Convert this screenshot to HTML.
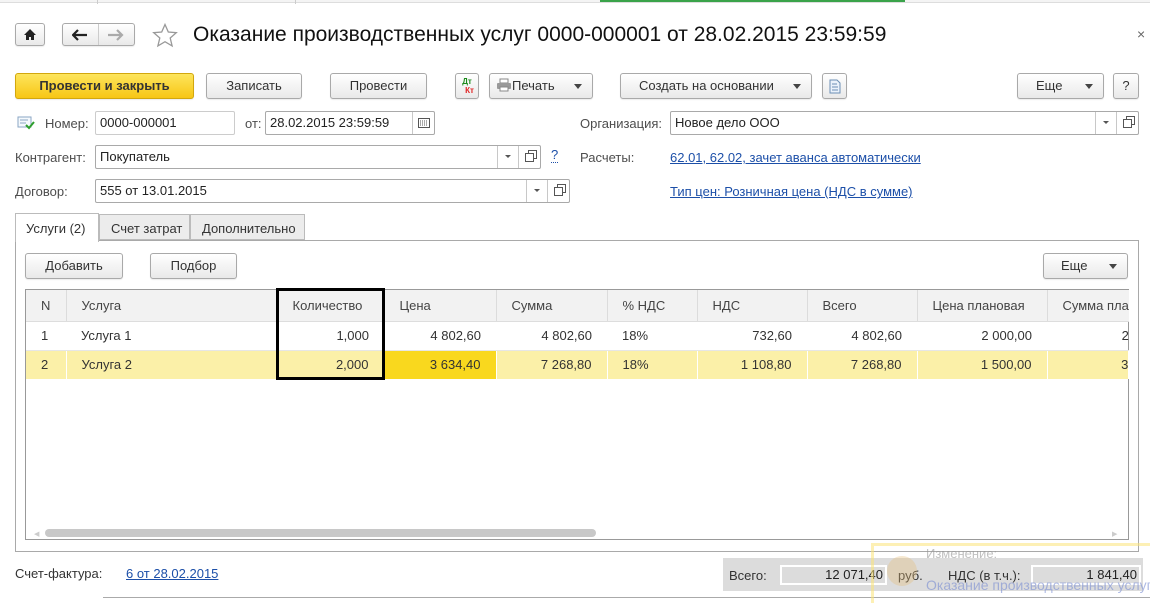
<!DOCTYPE html>
<html><head><meta charset="utf-8"><style>
*{box-sizing:border-box;margin:0;padding:0}
body{width:1150px;height:598px;overflow:hidden;background:#fff;font-family:"Liberation Sans",Arial,sans-serif;font-size:12.5px;color:#333;position:relative}
.a{position:absolute}
.btn{position:absolute;border:1px solid #a9a9a9;border-radius:3px;background:linear-gradient(#fff,#e9e9e9);text-align:center;color:#333;font-size:13px;box-shadow:0 1px 1px rgba(0,0,0,.08)}
.inp{position:absolute;border:1px solid #a9a9a9;border-radius:2px;background:#fff;padding-left:4px;color:#222;font-size:13px}
.lbl{position:absolute;color:#4d4d4d;font-size:13px}
.lnk{position:absolute;color:#1c4fa8;text-decoration:underline;font-size:13px}
.tri{display:inline-block;width:0;height:0;border-left:4px solid transparent;border-right:4px solid transparent;border-top:5px solid #444;vertical-align:middle}
.dd{position:absolute;top:0;bottom:0;border-left:1px solid #c8c8c8;width:20px}
.dd .tri{position:absolute;left:7px;top:9px;border-width:3px 3px 4px;border-left-color:transparent;border-right-color:transparent;border-top-color:#555}
.op{position:absolute;top:0;bottom:0;border-left:1px solid #c8c8c8;width:22px}
.op:after{content:"";position:absolute;left:6px;top:7px;width:7px;height:7px;border:1px solid #555;box-shadow:3px -3px 0 -1px #fff,3px -3px 0 0 #555}
table{border-collapse:collapse;position:absolute;left:26px;top:290px;table-layout:fixed;font-size:13px}
td{height:29px;padding:0 15px;white-space:nowrap;overflow:hidden;color:#333}
thead td{background:#f2f2f2;height:31px;border-right:1px solid #dcdcdc;color:#444;border-bottom:1px solid #ddd}
tbody tr:first-child td{border-bottom:1px solid #e6e6e6}
.r{text-align:right}
.y td{background:#fbf0a8;border-right:1px solid #fff}
</style></head><body>
<div class="a" style="left:0;top:0;width:1150px;height:3px;border-bottom:1px solid #ddd;background:#f4f4f4"></div>
<div class="a" style="left:97px;top:0;width:1px;height:4px;background:#ccc"></div>
<div class="a" style="left:295px;top:0;width:1px;height:4px;background:#ccc"></div>
<div class="a" style="left:600px;top:0;width:305px;height:2px;background:#3aa34a"></div>

<div class="btn" style="left:15px;top:23px;width:30px;height:23px"><svg width="14" height="13" style="margin-top:4px" viewBox="0 0 14 13"><path d="M7 1L1 7h2v5h3V9h2v3h3V7h2z" fill="#222"/></svg></div>
<div class="btn" style="left:62px;top:23px;width:73px;height:23px"></div>
<div class="a" style="left:98px;top:24px;width:1px;height:21px;background:#ccc"></div>
<svg class="a" style="left:72px;top:29px" width="16" height="12"><path d="M1 6h14M6 1L1 6l5 5" stroke="#222" stroke-width="2.2" fill="none"/></svg>
<svg class="a" style="left:108px;top:29px" width="16" height="12"><path d="M0 6h14M9 1l5 5-5 5" stroke="#aaa" stroke-width="2.2" fill="none"/></svg>
<svg class="a" style="left:152px;top:23px" width="26" height="25" viewBox="0 0 26 25"><path d="M13 1.5l3.3 7.5 8 .7-6.1 5.3 1.9 7.9L13 18.7l-7.1 4.2 1.9-7.9L1.7 9.7l8-.7z" fill="none" stroke="#999" stroke-width="1.3"/></svg>
<div class="a" style="left:193px;top:23px;font-size:21px;color:#111;white-space:nowrap">Оказание производственных услуг 0000-000001 от 28.02.2015 23:59:59</div>
<div class="a" style="left:1137px;top:26px;font-size:14px;color:#666">×</div>

<div class="btn" style="left:15px;top:73px;width:179px;height:26px;line-height:24px;background:linear-gradient(#fde55c,#f7c615);border-color:#d2a70e;font-weight:bold;color:#333">Провести и закрыть</div>
<div class="btn" style="left:206px;top:73px;width:96px;height:26px;line-height:24px">Записать</div>
<div class="btn" style="left:330px;top:73px;width:97px;height:26px;line-height:24px">Провести</div>
<div class="btn" style="left:455px;top:73px;width:24px;height:26px;font-size:8px;font-weight:bold;line-height:9px;padding-top:3px"><span style="color:#1a8a1a">Дт</span><br><span style="color:#e02020;padding-left:5px">Кт</span></div>
<div class="btn" style="left:489px;top:73px;width:104px;height:26px;line-height:24px;text-align:left;padding-left:6px"><svg width="16" height="14" style="vertical-align:-2px" viewBox="0 0 16 14"><rect x="4" y="1" width="8" height="4" fill="#fff" stroke="#888"/><rect x="1" y="5" width="14" height="6" rx="1" fill="#999"/><rect x="4" y="9" width="8" height="4" fill="#fff" stroke="#888"/></svg>Печать<span class="tri" style="position:absolute;right:10px;top:10px"></span></div>
<div class="btn" style="left:620px;top:73px;width:192px;height:26px;line-height:24px;text-align:left;padding-left:18px">Создать на основании<span class="tri" style="position:absolute;right:10px;top:10px"></span></div>
<div class="btn" style="left:822px;top:73px;width:25px;height:26px"><svg width="12" height="15" style="margin-top:5px" viewBox="0 0 12 15"><path d="M1 1h7l3 3v10H1z" fill="#eaf2fb" stroke="#6c8fb5"/><path d="M3 5h5M3 8h6M3 11h6" stroke="#6c8fb5"/></svg></div>
<div class="btn" style="left:1017px;top:73px;width:87px;height:26px;line-height:24px;text-align:left;padding-left:18px">Еще<span class="tri" style="position:absolute;right:10px;top:10px"></span></div>
<div class="btn" style="left:1113px;top:73px;width:26px;height:26px;line-height:24px">?</div>

<svg class="a" style="left:17px;top:116px" width="18" height="14" viewBox="0 0 18 14"><rect x="1" y="1" width="13" height="10" fill="#f5f9fd" stroke="#8aa6c4"/><path d="M3 4h8M3 7h6" stroke="#8aa6c4"/><path d="M9 9l3 3 5-6" stroke="#2e9e2e" stroke-width="2" fill="none"/></svg>
<div class="lbl" style="left:45px;top:116px">Номер:</div>
<div class="inp" style="left:95px;top:111px;width:140px;height:24px;line-height:22px;border-color:#ccc">0000-000001</div>
<div class="lbl" style="left:245px;top:116px">от:</div>
<div class="inp" style="left:265px;top:111px;width:170px;height:24px;line-height:22px">28.02.2015 23:59:59<div class="dd" style="right:0;width:22px"><svg width="12" height="10" style="position:absolute;left:5px;top:6px"><rect x=".5" y=".5" width="11" height="9" fill="none" stroke="#555"/><path d="M2 3h8M2 5h8M2 7h8" stroke="#555" stroke-dasharray="1 1"/></svg></div></div>
<div class="lbl" style="left:580px;top:116px">Организация:</div>
<div class="inp" style="left:670px;top:111px;width:469px;height:24px;line-height:22px">Новое дело ООО<div class="dd" style="right:23px"><span class="tri"></span></div><div class="op" style="right:0"></div></div>

<div class="lbl" style="left:15px;top:150px">Контрагент:</div>
<div class="inp" style="left:95px;top:145px;width:446px;height:24px;line-height:22px">Покупатель<div class="dd" style="right:23px"><span class="tri"></span></div><div class="op" style="right:0"></div></div>
<div class="a" style="left:551px;top:148px;color:#1c4fa8;font-size:13px;border-bottom:1px dotted #1c4fa8;line-height:14px">?</div>
<div class="lbl" style="left:580px;top:150px">Расчеты:</div>
<div class="lnk" style="left:670px;top:150px">62.01, 62.02, зачет аванса автоматически</div>

<div class="lbl" style="left:15px;top:184px">Договор:</div>
<div class="inp" style="left:95px;top:179px;width:475px;height:24px;line-height:22px">555 от 13.01.2015<div class="dd" style="right:23px"><span class="tri"></span></div><div class="op" style="right:0"></div></div>
<div class="lnk" style="left:670px;top:184px">Тип цен: Розничная цена (НДС в сумме)</div>

<div class="a" style="left:15px;top:240px;width:1124px;height:312px;border:1px solid #a9a9a9"></div>
<div class="a" style="left:15px;top:213px;width:84px;height:29px;border:1px solid #bbb;border-bottom:none;background:#fff;padding:7px 0 0 10px;font-size:13px;color:#333">Услуги (2)</div>
<div class="a" style="left:99px;top:214px;width:91px;height:26px;border:1px solid #bbb;background:#ececec;padding:6px 0 0 11px;font-size:13px">Счет затрат</div>
<div class="a" style="left:190px;top:214px;width:115px;height:26px;border:1px solid #bbb;background:#ececec;padding:6px 0 0 11px;font-size:13px">Дополнительно</div>

<div class="btn" style="left:25px;top:253px;width:98px;height:26px;line-height:24px">Добавить</div>
<div class="btn" style="left:150px;top:253px;width:87px;height:26px;line-height:24px">Подбор</div>
<div class="btn" style="left:1043px;top:253px;width:85px;height:26px;line-height:24px;text-align:left;padding-left:17px">Еще<span class="tri" style="position:absolute;right:10px;top:10px"></span></div>

<div class="a" style="left:25px;top:289px;width:1104px;height:251px;border:1px solid #999"></div>
<table>
<colgroup><col style="width:40px"><col style="width:211px"><col style="width:107px"><col style="width:112px"><col style="width:111px"><col style="width:90px"><col style="width:110px"><col style="width:110px"><col style="width:130px"><col style="width:81px"></colgroup>
<thead><tr><td>N</td><td>Услуга</td><td>Количество</td><td>Цена</td><td>Сумма</td><td>% НДС</td><td>НДС</td><td>Всего</td><td>Цена плановая</td><td style="padding-right:0;border-right:none">Сумма пла</td></tr></thead>
<tbody><tr><td>1</td><td>Услуга 1</td><td class="r">1,000</td><td class="r">4 802,60</td><td class="r">4 802,60</td><td>18%</td><td class="r">732,60</td><td class="r">4 802,60</td><td class="r">2 000,00</td><td class="r" style="padding-right:0">2</td></tr>
<tr class="y"><td>2</td><td>Услуга 2</td><td class="r">2,000</td><td class="r" style="background:#f9d81e">3 634,40</td><td class="r">7 268,80</td><td>18%</td><td class="r">1 108,80</td><td class="r">7 268,80</td><td class="r">1 500,00</td><td class="r" style="padding-right:0">3</td></tr></tbody>
</table>
<div class="a" style="left:276px;top:288px;width:109px;height:92px;border:3px solid #000"></div>
<div class="a" style="left:45px;top:529px;width:551px;height:8px;border-radius:4px;background:#c8c8c8"></div>
<div class="a" style="left:34px;top:530px;font-size:7px;color:#ccc">◀</div>
<div class="a" style="left:1112px;top:530px;font-size:7px;color:#ccc">▶</div>

<div class="lbl" style="left:15px;top:566px;color:#333">Счет-фактура:</div>
<div class="lnk" style="left:126px;top:566px">6 от 28.02.2015</div>
<div class="a" style="left:103px;top:597px;width:1047px;height:1px;background:#aaa"></div>

<div class="a" style="left:723px;top:558px;width:420px;height:33px;background:#dcdcdc"></div>
<div class="lbl" style="left:729px;top:568px;color:#333">Всего:</div>
<div class="a" style="left:780px;top:565px;width:107px;height:20px;border:2px solid #fff;background:#dcdcdc;text-align:right;padding-right:2px;font-size:13px;color:#222;line-height:16px">12 071,40</div>
<div class="lbl" style="left:898px;top:568px;color:#333">руб.</div>
<div class="lbl" style="left:948px;top:568px;color:#333">НДС (в т.ч.):</div>
<div class="a" style="left:1031px;top:565px;width:110px;height:20px;border:2px solid #fff;background:#dcdcdc;text-align:right;padding-right:2px;font-size:13px;color:#222;line-height:16px">1 841,40</div>

<div class="a" style="left:871px;top:543px;width:290px;height:60px;border:3px solid rgba(252,228,120,.55);border-right:none;border-bottom:none"></div>
<div class="a" style="left:887px;top:556px;width:30px;height:30px;border-radius:50%;background:rgba(230,190,120,.35)"></div>
<div class="a" style="left:926px;top:546px;font-size:13px;color:rgba(150,150,150,.6)">Изменение:</div>
<div class="a" style="left:926px;top:577px;font-size:14px;color:rgba(120,140,210,.6);white-space:nowrap">Оказание производственных услуг</div>
</body></html>
